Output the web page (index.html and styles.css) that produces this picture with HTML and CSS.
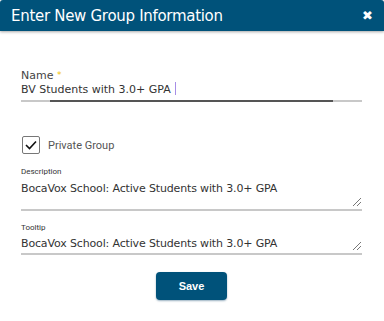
FILE: index.html
```html
<html lang="en">
	<head>
		<meta charset="utf-8" />
		<meta name="viewport" content="width=device-width, initial-scale=1" />
		<title>Enter New Group Information</title>
		<link rel="stylesheet" href="styles.css">
	</head>

	<body>
		<div class="dialog">
			<div class="dialog-header">
				<span class="dialog-title">Enter New Group Information</span>
				<span class="dialog-close">&#10006;</span>
			</div>

			<div class="dialog-body">
				<div class="field field-name">
					<label class="field-label">Name <span class="required">*</span></label>
					<div class="field-input">BV Students with 3.0+ GPA<span class="caret"></span></div>
					<div class="focus-bar"></div>
				</div>

				<div class="check-row">
					<span class="checkbox">
						<svg width="12" height="10" viewBox="0 0 12 10">
							<path d="M1 5 L4.5 8.5 L11 1.5" fill="none" stroke="#111" stroke-width="1.6" />
						</svg>
					</span>
					<span class="check-label">Private Group</span>
				</div>

				<div class="field field-area field-desc">
					<label class="small-label">Description</label>
					<div class="field-input">BocaVox School: Active Students with 3.0+ GPA</div>
					<span class="resize"></span>
				</div>

				<div class="field field-area field-tip">
					<label class="small-label">Tooltip</label>
					<div class="field-input">BocaVox School: Active Students with 3.0+ GPA</div>
					<span class="resize"></span>
				</div>

				<div class="actions">
					<button class="save-btn">Save</button>
				</div>
			</div>
		</div>
	</body>
</html>
```

FILE: styles.css
```css
body {
	margin: 0;
	background: #fff;
	font-family: 'DejaVu Sans', Verdana, sans-serif;
	color: #333;
}

.dialog {
	width: 384px;
	height: 321px;
	overflow: hidden;
}

.dialog-header {
	height: 31px;
	background: #00527a;
	border-radius: 3px 3px 0 0;
	box-shadow: 0 1px 3px rgba(0, 0, 0, 0.35);
	display: flex;
	align-items: center;
	justify-content: space-between;
	padding: 0 11px 0 11px;
	color: #fff;
}

.dialog-title {
	font-size: 15px;
	letter-spacing: -0.3px;
}

.dialog-close {
	font-size: 13px;
	font-weight: bold;
}

.dialog-body {
	padding: 38px 21px 0 21px;
	width: 341px;
}

.field {
	position: relative;
	border-bottom: 2px solid #c8c8c8;
}

.field-label {
	display: block;
	font-size: 11px;
	color: #444;
	line-height: 13px;
}

.required {
	color: #f2c200;
	font-size: 9px;
	vertical-align: top;
}

.field-input {
	font-size: 11px;
	color: #333;
	line-height: 16px;
	padding-bottom: 2px;
}

.field-area .field-input {
	letter-spacing: -0.15px;
}

.caret {
	display: inline-block;
	width: 1.5px;
	height: 13px;
	margin-left: 4px;
	vertical-align: -2px;
	background: #a78ee6;
}

.focus-bar {
	position: absolute;
	left: 29px;
	right: 29px;
	bottom: -2px;
	height: 2px;
	background: #555;
}

.check-row {
	display: flex;
	align-items: center;
	margin-top: 34px;
	margin-left: 1px;
}

.checkbox {
	width: 16px;
	height: 16px;
	border: 1px solid #777;
	border-radius: 2px;
	display: flex;
	align-items: center;
	justify-content: center;
}

.check-label {
	margin-left: 8px;
	font-family: Roboto, 'Noto Sans', sans-serif;
	font-size: 11px;
	color: #555;
}

.small-label {
	display: block;
	font-family: Roboto, 'Noto Sans', sans-serif;
	font-size: 8px;
	color: #333;
	line-height: 10px;
}

.field-desc {
	margin-top: 13px;
}

.field-desc .field-input {
	padding-top: 4px;
	height: 26px;
}

.field-tip {
	margin-top: 12px;
}

.field-tip .field-input {
	padding-top: 3px;
	height: 15px;
}

.resize {
	position: absolute;
	right: 1px;
	bottom: 3px;
	width: 8px;
	height: 8px;
	background: linear-gradient(135deg, transparent 45%, #777 45%, #777 55%, transparent 55%, transparent 70%, #777 70%, #777 80%, transparent 80%);
}

.actions {
	display: flex;
	justify-content: center;
	margin-top: 17px;
}

.save-btn {
	width: 71px;
	height: 28px;
	background: #00527a;
	color: #fff;
	border: none;
	border-radius: 4px;
	box-shadow: 0 1px 2px rgba(0, 60, 100, 0.4);
	font-family: 'Liberation Sans', Arial, sans-serif;
	font-weight: bold;
	font-size: 11px;
}
```
